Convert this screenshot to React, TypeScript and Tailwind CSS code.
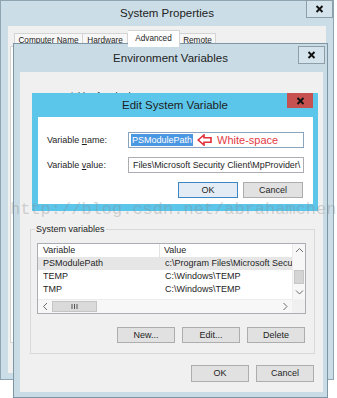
import React from "react";

function Chevron({ dir }: { dir: "up" | "down" | "left" | "right" }) {
  const pts =
    dir === "up"
      ? "1,5 4.5,1.5 8,5"
      : dir === "down"
      ? "1,1.5 4.5,5 8,1.5"
      : dir === "left"
      ? "5,1 1.5,4.5 5,8"
      : "1.5,1 5,4.5 1.5,8";
  const w = dir === "up" || dir === "down" ? 9 : 7;
  const h = dir === "up" || dir === "down" ? 7 : 9;
  return (
    <svg width={w} height={h} viewBox={`0 0 ${w} ${h}`}>
      <polyline points={pts} fill="none" stroke="#6b6b6b" strokeWidth="1" />
    </svg>
  );
}

function CloseBox({ className }: { className: string }) {
  return (
    <div className={className}>
      <svg width="9" height="8" viewBox="0 0 9 8">
        <path d="M1.5 1 L7.5 7 M7.5 1 L1.5 7" stroke="#111" strokeWidth="1.9" />
      </svg>
    </div>
  );
}

function SystemProperties() {
  return (
    <div className="absolute left-0 top-0 w-[334px] h-[380px] flex flex-col border border-[#8ea4b0] bg-[#cbdde6]">
      <div className="relative h-[25px] flex items-center justify-center text-[11.5px] text-[#222]">
        System Properties
        <CloseBox className="absolute right-0 -top-px w-[27px] h-[18px] border border-[#8d9fa9] bg-[#d5e4ec] flex items-center justify-center" />
      </div>
      <div className="flex-1 mx-[7px] mb-[6px] bg-[#f0f0f0] px-[2px] pt-[4px] flex flex-col">
        <div className="flex items-end pl-[4px] h-[16px] text-[8.2px]">
          <div className="w-[69px] h-[13px] border border-b-0 border-[#d4d4d4] bg-[#f7f7f7] flex items-center justify-center whitespace-nowrap">
            Computer Name
          </div>
          <div className="w-[45px] h-[13px] border border-l-0 border-b-0 border-[#d4d4d4] bg-[#f7f7f7] flex items-center justify-center">
            Hardware
          </div>
          <div className="w-[52px] h-[17px] border border-l-0 border-b-0 border-[#d4d4d4] bg-white flex items-start pt-[2px] justify-center relative z-10 -mb-px">
            Advanced
          </div>
          <div className="w-[36px] h-[13px] border border-l-0 border-b-0 border-[#d4d4d4] bg-[#f7f7f7] flex items-center justify-center">
            Remote
          </div>
        </div>
        <div className="h-[297px] border border-[#d4d4d4] bg-white"></div>
      </div>
    </div>
  );
}

function ListView() {
  const rows = [
    { v: "PSModulePath", val: "c:\\Program Files\\Microsoft Security Client\\MpProvider\\", sel: true },
    { v: "TEMP", val: "C:\\Windows\\TEMP", sel: false },
    { v: "TMP", val: "C:\\Windows\\TEMP", sel: false },
  ];
  return (
    <div className="mt-[8px] w-[269px] h-[71px] border border-[#abadb3] bg-white grid grid-cols-[254px_13px] grid-rows-[55px_14px]">
      <div className="overflow-hidden">
        <div className="h-[13px] flex items-center">
          <div className="w-[122px] h-full pl-[5px] flex items-center border-r border-[#e3e3e3]">Variable</div>
          <div className="pl-[4px]">Value</div>
        </div>
        {rows.map((r) => (
          <div
            key={r.v}
            className={`h-[13px] flex items-center whitespace-nowrap ${r.sel ? "bg-[#e6e6e6]" : ""}`}
          >
            <div className="w-[122px] shrink-0 pl-[5px]">{r.v}</div>
            <div className="pl-[5px] overflow-hidden">{r.val}</div>
          </div>
        ))}
      </div>
      <div className="flex flex-col bg-[#f7f7f7] border-l border-[#ececec]">
        <div className="h-[13px] flex items-center justify-center">
          <Chevron dir="up" />
        </div>
        <div className="h-[13px]"></div>
        <div className="h-[14px] mx-[1px] bg-[#d4d4d4] border border-[#c6c6c6]"></div>
        <div className="flex-1"></div>
        <div className="h-[13px] flex items-center justify-center">
          <Chevron dir="down" />
        </div>
      </div>
      <div className="flex bg-[#f7f7f7] border-t border-[#ececec]">
        <div className="w-[14px] flex items-center justify-center">
          <Chevron dir="left" />
        </div>
        <div className="w-[45px] my-[1px] bg-[#dadada] border border-[#c4c4c4] flex items-center justify-center">
          <svg width="7" height="5" viewBox="0 0 7 5">
            <path d="M1 0 V5 M3.5 0 V5 M6 0 V5" stroke="#555" strokeWidth="1" />
          </svg>
        </div>
        <div className="flex-1"></div>
        <div className="w-[14px] flex items-center justify-center">
          <Chevron dir="right" />
        </div>
      </div>
      <div className="bg-[#f0f0f0]"></div>
    </div>
  );
}

function Btn({ label, className }: { label: string; className: string }) {
  return (
    <div className={`flex items-center justify-center border border-[#adadad] bg-[#e1e1e1] ${className}`}>
      {label}
    </div>
  );
}

function EnvWindow() {
  return (
    <div className="absolute left-[13px] top-[43px] w-[315px] h-[355px] flex flex-col border border-[#7e96a4] bg-[#c9dce6]">
      <div className="relative h-[28px] flex items-center justify-center text-[11.5px] text-[#222]">
        Environment Variables
        <CloseBox className="absolute right-[2px] top-[2px] w-[27px] h-[18px] border border-[#8d9fa9] bg-[#d5e4ec] flex items-center justify-center" />
      </div>
      <div className="flex-1 ml-[6px] mr-[4px] mb-[5px] bg-[#f0f0f0] pt-[18px] flex flex-col">
        <div className="ml-[17px] h-[12px] leading-[12px]">User variables for Abraham</div>
        <div className="ml-[10px] mt-[127px] w-[285px] border border-[#d9d9d9] pl-[6px] pr-[8px] pb-[10px]">
          <div className="-mt-[7px] -ml-[2px] w-fit px-[1px] bg-[#f0f0f0] leading-[12px]">System variables</div>
          <ListView />
          <div className="mt-[13px] flex justify-end gap-[7px] mr-[1px]">
            <Btn label="New..." className="w-[58px] h-[16px]" />
            <Btn label="Edit..." className="w-[58px] h-[16px]" />
            <Btn label="Delete" className="w-[58px] h-[16px]" />
          </div>
        </div>
        <div className="mt-[11px] flex justify-end gap-[7px] pr-[9px]">
          <Btn label="OK" className="w-[58px] h-[17px]" />
          <Btn label="Cancel" className="w-[58px] h-[17px]" />
        </div>
      </div>
    </div>
  );
}

function EditDialog() {
  return (
    <div className="absolute left-[32px] top-[93px] w-[286px] h-[118px] flex flex-col bg-[#5bc5ea]">
      <div className="relative h-[24px] flex items-center justify-center text-[11.5px] text-[#1e1e1e]">
        Edit System Variable
        <CloseBox className="absolute right-[5px] top-0 w-[26px] h-[15px] bg-[#c75050] flex items-center justify-center" />
      </div>
      <div className="flex-1 ml-[6px] mr-[5px] mb-[7px] bg-white pt-[15px] pl-[9px] pr-[9px]">
        <div className="flex items-center h-[16px]">
          <div className="w-[81px]">
            Variable <span className="underline">n</span>ame:
          </div>
          <div className="w-[176px] h-[16px] border border-[#8aa4bd] flex items-center pl-[2px] whitespace-nowrap">
            <span className="bg-[#4a97e2] text-white px-[1px] leading-[12px]">PSModulePath</span>
            <svg width="15" height="12" viewBox="0 0 15 12" className="ml-[4px]">
              <polygon
                points="1.2,6 7,1 7,3.8 14,3.8 14,8.2 7,8.2 7,11"
                fill="white"
                stroke="#e0303a"
                strokeWidth="1.6"
                strokeLinejoin="miter"
              />
            </svg>
            <span className="ml-[5px] text-[11px] text-[#e23a44]">White-space</span>
          </div>
        </div>
        <div className="flex items-center h-[16px] mt-[9px]">
          <div className="w-[81px]">
            Variable <span className="underline">v</span>alue:
          </div>
          <div className="w-[176px] h-[16px] border border-[#abadb3] flex items-center pl-[4px] whitespace-nowrap overflow-hidden text-[8.9px]">
            Files\Microsoft Security Client\MpProvider\
          </div>
        </div>
        <div className="mt-[9px] flex justify-end gap-[5px] mr-[1px]">
          <div className="w-[60px] h-[16px] flex items-center justify-center border border-[#3d86c6] bg-[#e3ecf4]">OK</div>
          <div className="w-[60px] h-[16px] flex items-center justify-center border border-[#adadad] bg-[#e1e1e1]">Cancel</div>
        </div>
      </div>
    </div>
  );
}

export default function App() {
  return (
    <div className="relative w-[337px] h-[398px] overflow-hidden bg-white font-['Liberation_Sans',Arial,sans-serif] text-[9px] leading-[11px] text-[#1e1e1e]">
      <SystemProperties />
      <EnvWindow />
      <EditDialog />
      <div className="absolute left-[10px] top-[201px] whitespace-nowrap pointer-events-none font-['Liberation_Mono','Courier_New',monospace] text-[17px] leading-[18px] text-[#8c8c8c]/35">
        http://blog.csdn.net/abrahamcheng
      </div>
    </div>
  );
}
